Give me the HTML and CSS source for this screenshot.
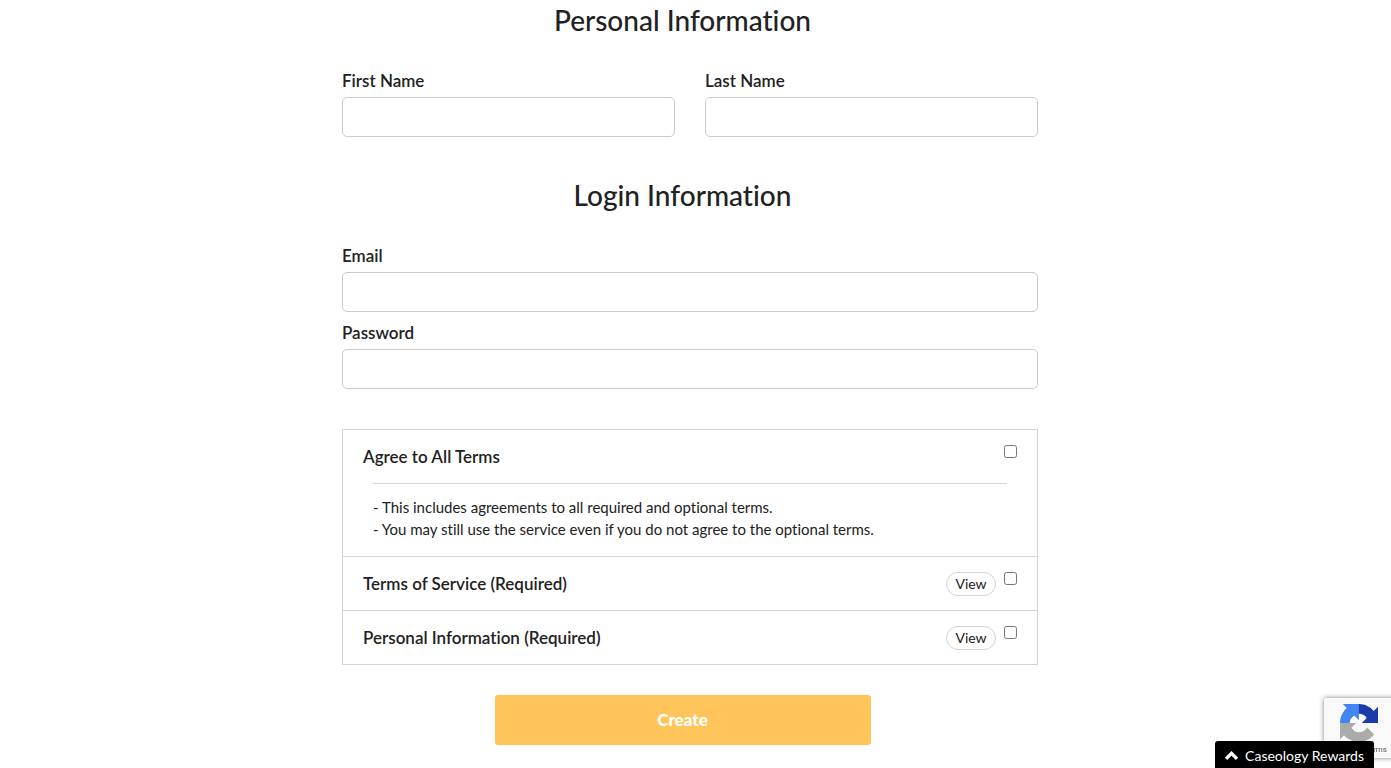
FILE: index.html
```html
<!DOCTYPE html>
<html lang="en">

<head>
    <meta charset="UTF-8">
    <meta name="viewport" content="width=device-width, initial-scale=1.0">
    <title>Create Account</title>
    <link rel="stylesheet" href="styles.css">
</head>

<body>
    <main>
        <form class="register">
            <h2>Personal Information</h2>
            <div class="fields two-columns">
                <div class="field">
                    <label for="first-name">First Name</label>
                    <input type="text" id="first-name">
                </div>
                <div class="field">
                    <label for="last-name">Last Name</label>
                    <input type="text" id="last-name">
                </div>
            </div>

            <h2>Login Information</h2>
            <div class="fields">
                <div class="field">
                    <label for="email">Email</label>
                    <input type="email" id="email">
                </div>
                <div class="field">
                    <label for="password">Password</label>
                    <input type="password" id="password">
                </div>
            </div>

            <div class="terms">
                <div class="term">
                    <div class="term-row">
                        <label for="agree-all">Agree to All Terms</label>
                        <input type="checkbox" id="agree-all">
                    </div>
                    <p class="term-note">- This includes agreements to all required and optional terms.<br>
                        - You may still use the service even if you do not agree to the optional terms.</p>
                </div>
                <div class="term">
                    <div class="term-row">
                        <label for="agree-service">Terms of Service (Required)</label>
                        <button type="button" class="view">View</button>
                        <input type="checkbox" id="agree-service">
                    </div>
                </div>
                <div class="term">
                    <div class="term-row">
                        <label for="agree-personal">Personal Information (Required)</label>
                        <button type="button" class="view">View</button>
                        <input type="checkbox" id="agree-personal">
                    </div>
                </div>
            </div>

            <button type="submit" class="create">Create</button>
        </form>
    </main>

    <div class="captcha">
        <svg viewBox="0 0 64 64" aria-hidden="true">
            <path fill="#1c3aa9" d="M64 31.955l-.033-1.37V4.687l-7.16 7.16C50.948 4.674 42.033.093 32.05.093c-10.4 0-19.622 4.96-25.458 12.64l11.736 11.86a15.55 15.55 0 0 1 4.754-5.334c2.05-1.6 4.952-2.906 8.968-2.906.485 0 .86.057 1.135.163 4.976.393 9.288 3.14 11.828 7.124l-8.307 8.307L64 31.953"/>
            <path fill="#4285f4" d="M31.862.094l-1.37.033H4.594l7.16 7.16C4.58 13.147 0 22.06 0 32.046c0 10.4 4.96 19.622 12.64 25.458L24.5 45.768a15.55 15.55 0 0 1-5.334-4.754c-1.6-2.05-2.906-4.952-2.906-8.968 0-.485.057-.86.163-1.135.393-4.976 3.14-9.288 7.124-11.828l8.307 8.307L31.86.095"/>
            <path fill="#ababab" d="M.001 32.045l.033 1.37v25.898l7.16-7.16c5.86 7.173 14.774 11.754 24.76 11.754 10.4 0 19.622-4.96 25.458-12.64l-11.736-11.86a15.55 15.55 0 0 1-4.754 5.334c-2.05 1.6-4.952 2.906-8.968 2.906-.485 0-.86-.057-1.135-.163-4.976-.393-9.288-3.14-11.828-7.124l8.307-8.307c-10.522.04-22.4.066-27.295-.005"/>
        </svg>
        <span>Terms</span>
    </div>

    <button type="button" class="rewards">
        <svg viewBox="0 0 12 8" aria-hidden="true">
            <path d="M1 7l5-5 5 5" fill="none" stroke="#fff" stroke-width="3"/>
        </svg>
        Caseology Rewards
    </button>
</body>

</html>
```
FILE: styles.css
```css
* {
    box-sizing: border-box;
}

body {
    font-family: Lato, sans-serif;
    font-size: 17px;
    line-height: 22px;
    font-variant-ligatures: none;
    background-color: #fff;
    color: #212121;
    margin: 0;
    padding: 2px 26px 0 0;
}

main {
    max-width: 711px;
    margin: 0 auto;
}

h2 {
    font-size: 28px;
    font-weight: 500;
    line-height: 36px;
    text-align: center;
    margin: 0 0 32px;
}

.fields {
    display: grid;
    gap: 10px 30px;
    padding-left: 15px;
    margin-bottom: 40px;
}

.two-columns {
    grid-template-columns: 1fr 1fr;
}

.field label {
    display: block;
    font-weight: 600;
    margin-bottom: 5px;
}

.field input {
    display: block;
    width: 100%;
    height: 40px;
    padding: 0 12px;
    border: 1px solid #ccc;
    border-radius: 5px;
    font: inherit;
}

.terms {
    margin: 0 0 30px 15px;
    border: 1px solid #d3d3d3;
}

.term {
    padding: 15px 20px;
}

.term + .term {
    border-top: 1px solid #d3d3d3;
}

.term-row {
    display: flex;
    align-items: center;
    gap: 8px;
    height: 23px;
}

.term-row label {
    flex: 1;
    font-weight: 600;
}

.term-row input {
    width: 13px;
    height: 13px;
    margin: 0;
    align-self: flex-start;
}

.view {
    width: 50px;
    height: 24px;
    padding: 0 0 1px;
    background-color: #fff;
    color: #212121;
    border: 1px solid #d3d3d3;
    border-radius: 12px;
    font-family: inherit;
    font-size: 14px;
}

.term-note {
    margin: 15px 10px 0;
    padding: 12px 0 1px;
    border-top: 1px solid #d3d3d3;
    font-size: 15px;
}

.create {
    display: block;
    width: 376px;
    max-width: 100%;
    height: 50px;
    margin: 0 auto;
    padding: 0 0 2px;
    background-color: #ffc55a;
    color: #fff;
    border: none;
    border-radius: 3px;
    font-family: inherit;
    font-size: 17px;
    font-weight: 900;
    cursor: pointer;
}

/* floating widgets */
.captcha {
    position: fixed;
    right: -189px;
    bottom: 10px;
    width: 256px;
    height: 60px;
    padding: 6px 0 0 16px;
    background-color: #f9f9f9;
    border-radius: 2px;
    box-shadow: 0 0 5px gray;
    overflow: hidden;
}

.captcha svg {
    display: block;
    width: 38px;
    height: 38px;
}

.captcha span {
    display: block;
    width: 47px;
    color: #555;
    font-family: Roboto, sans-serif;
    font-size: 8px;
    line-height: 16px;
    text-align: right;
}

.rewards {
    position: fixed;
    right: 17px;
    bottom: 0;
    display: flex;
    align-items: center;
    gap: 7px;
    height: 27px;
    padding: 2px 10px 0;
    background-color: #000;
    color: #fff;
    border: none;
    border-radius: 3px 3px 0 0;
    font-family: Lato, sans-serif;
    font-size: 14px;
    cursor: pointer;
}

.rewards svg {
    width: 13px;
    height: 9px;
}
```
